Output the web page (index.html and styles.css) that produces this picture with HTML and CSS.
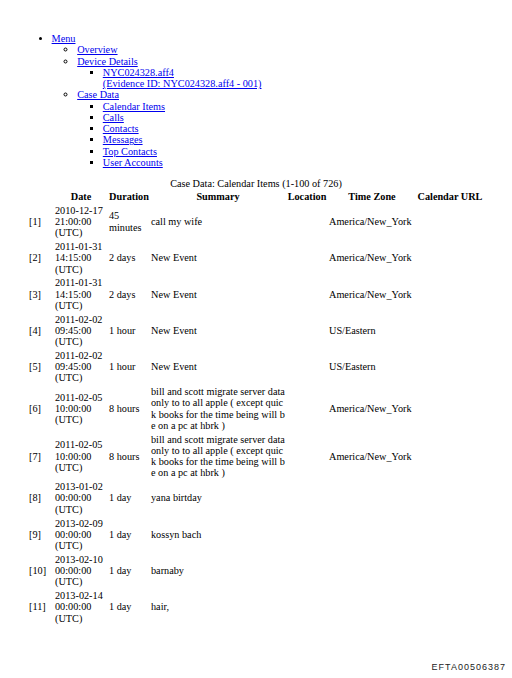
FILE: index.html
```html
<!DOCTYPE html>
<html>
<head>
<meta charset="utf-8">
<link rel="stylesheet" href="styles.css">
</head>
<body>
<div class="page">
  <ul class="menu">
    <li><a href="#">Menu</a>
      <ul class="sub">
        <li><a href="#">Overview</a></li>
        <li><a href="#">Device Details</a>
          <ul class="sub">
            <li><a href="#">NYC024328.aff4<br>(Evidence ID: NYC024328.aff4 - 001)</a></li>
          </ul>
        </li>
        <li><a href="#">Case Data</a>
          <ul class="sub">
            <li><a href="#">Calendar Items</a></li>
            <li><a href="#">Calls</a></li>
            <li><a href="#">Contacts</a></li>
            <li><a href="#">Messages</a></li>
            <li><a href="#">Top Contacts</a></li>
            <li><a href="#">User Accounts</a></li>
          </ul>
        </li>
      </ul>
    </li>
  </ul>
  <table class="items">
    <caption>Case Data: Calendar Items (1-100 of 726)</caption>
    <colgroup>
      <col class="c-idx"><col class="c-date"><col class="c-dur"><col class="c-sum"><col class="c-loc"><col class="c-tz"><col class="c-url">
    </colgroup>
    <thead>
      <tr><th></th><th>Date</th><th>Duration</th><th>Summary</th><th>Location</th><th>Time Zone</th><th>Calendar URL</th></tr>
    </thead>
    <tbody>
      <tr><td>[1]</td><td>2010-12-17 21:00:00 (UTC)</td><td>45 minutes</td><td class="sum">call my wife</td><td></td><td>America/New_York</td><td></td></tr>
      <tr><td>[2]</td><td>2011-01-31 14:15:00 (UTC)</td><td>2 days</td><td class="sum">New Event</td><td></td><td>America/New_York</td><td></td></tr>
      <tr><td>[3]</td><td>2011-01-31 14:15:00 (UTC)</td><td>2 days</td><td class="sum">New Event</td><td></td><td>America/New_York</td><td></td></tr>
      <tr><td>[4]</td><td>2011-02-02 09:45:00 (UTC)</td><td>1 hour</td><td class="sum">New Event</td><td></td><td>US/Eastern</td><td></td></tr>
      <tr><td>[5]</td><td>2011-02-02 09:45:00 (UTC)</td><td>1 hour</td><td class="sum">New Event</td><td></td><td>US/Eastern</td><td></td></tr>
      <tr><td>[6]</td><td>2011-02-05 10:00:00 (UTC)</td><td>8 hours</td><td class="sum">bill and scott migrate server data only to to all apple ( except quick books for the time being will be on a pc at hbrk )</td><td></td><td>America/New_York</td><td></td></tr>
      <tr><td>[7]</td><td>2011-02-05 10:00:00 (UTC)</td><td>8 hours</td><td class="sum">bill and scott migrate server data only to to all apple ( except quick books for the time being will be on a pc at hbrk )</td><td></td><td>America/New_York</td><td></td></tr>
      <tr><td>[8]</td><td>2013-01-02 00:00:00 (UTC)</td><td>1 day</td><td class="sum">yana birtday</td><td></td><td></td><td></td></tr>
      <tr><td>[9]</td><td>2013-02-09 00:00:00 (UTC)</td><td>1 day</td><td class="sum">kossyn bach</td><td></td><td></td><td></td></tr>
      <tr><td>[10]</td><td>2013-02-10 00:00:00 (UTC)</td><td>1 day</td><td class="sum">barnaby</td><td></td><td></td><td></td></tr>
      <tr><td>[11]</td><td>2013-02-14 00:00:00 (UTC)</td><td>1 day</td><td class="sum">hair,</td><td></td><td></td><td></td></tr>
    </tbody>
  </table>
</div>
<div class="stamp">EFTA00506387</div>
</body>
</html>
```

FILE: styles.css
```css
html, body {
  margin: 0;
  padding: 0;
  background: #ffffff;
}
body {
  font-family: "Liberation Serif", "Times New Roman", serif;
  font-size: 10.24px;
  line-height: 11.25px;
  color: #000000;
  width: 512px;
  height: 678px;
  position: relative;
}
.page {
  padding: 23px 26px 0 26px;
}
a {
  color: #0000ee;
  text-decoration: underline;
}
.menu {
  margin: 10.24px 0;
  padding-left: 25.6px;
  list-style: disc;
}
.sub {
  margin: 0;
  padding-left: 25.6px;
}
.menu > li > .sub { list-style: circle; }
.menu > li > .sub > li > .sub { list-style: square; }
.items {
  width: 456px;
  margin: 0 auto;
  table-layout: fixed;
  border-collapse: separate;
  border-spacing: 0;
}
.items caption {
  text-align: center;
}
.items th, .items td {
  padding: 1.28px 1px;
  vertical-align: middle;
  text-align: left;
}
.items th {
  font-weight: bold;
  text-align: center;
}
.c-idx { width: 26px; }
.c-date { width: 54px; }
.c-dur { width: 42px; }
.c-sum { width: 136px; }
.c-loc { width: 42px; }
.c-tz { width: 88px; }
.c-url { width: 68px; }
.sum {
  word-break: break-all;
}
.stamp {
  position: absolute;
  right: 6px;
  bottom: 5px;
  font-family: "Liberation Sans", Arial, sans-serif;
  font-size: 9px;
  letter-spacing: 1px;
  color: #222222;
}
```
